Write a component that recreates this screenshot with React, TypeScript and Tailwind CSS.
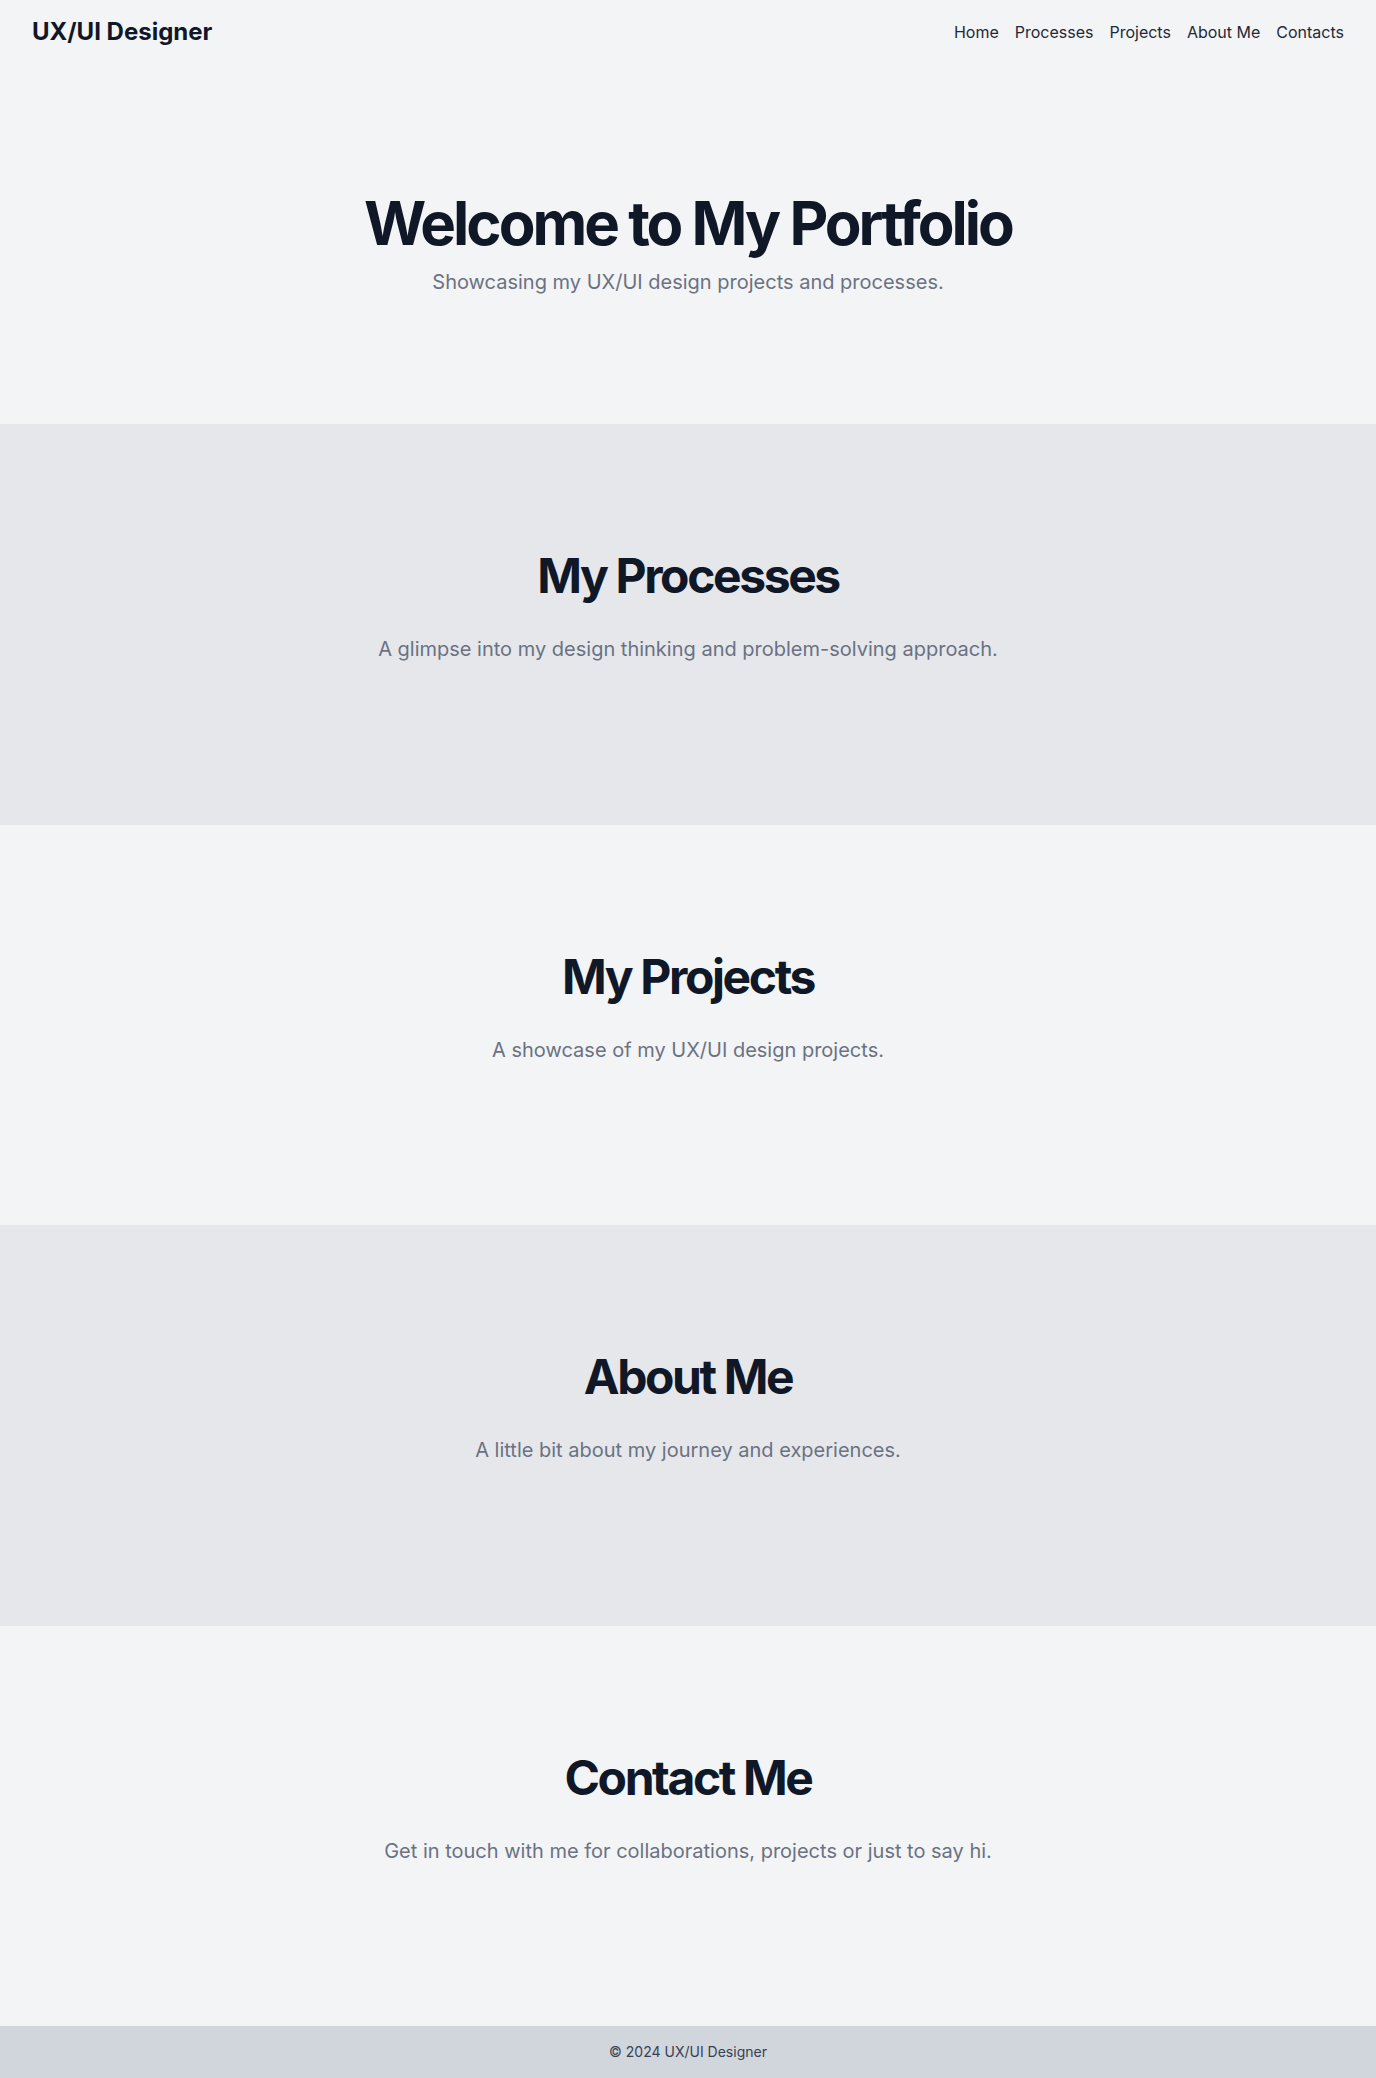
import React from "react";

const sections = [
  { title: "My Processes", text: "A glimpse into my design thinking and problem-solving approach.", bg: "bg-gray-200" },
  { title: "My Projects", text: "A showcase of my UX/UI design projects.", bg: "bg-gray-100" },
  { title: "About Me", text: "A little bit about my journey and experiences.", bg: "bg-gray-200" },
  { title: "Contact Me", text: "Get in touch with me for collaborations, projects or just to say hi.", bg: "bg-gray-100" },
];

export default function App() {
  return (
    <div className="font-['Inter',sans-serif] bg-gray-100 min-h-screen">
      <header className="h-16 px-8 flex items-center justify-between bg-gray-100">
        <div className="text-2xl font-bold text-gray-900">UX/UI Designer</div>
        <nav className="flex gap-4 text-base text-gray-800">
          <a href="#">Home</a>
          <a href="#">Processes</a>
          <a href="#">Projects</a>
          <a href="#">About Me</a>
          <a href="#">Contacts</a>
        </nav>
      </header>
      <section className="h-[360px] flex flex-col items-center justify-center bg-gray-100 text-center">
        <h1 className="text-6xl leading-none font-bold tracking-tighter text-gray-900">Welcome to My Portfolio</h1>
        <p className="mt-[15px] text-xl text-gray-500">Showcasing my UX/UI design projects and processes.</p>
      </section>
      {sections.map((s) => (
        <section key={s.title} className={`h-[400.5px] pt-32 text-center ${s.bg}`}>
          <h2 className="text-5xl leading-none font-bold tracking-tighter text-gray-900">{s.title}</h2>
          <p className="mt-[35px] text-xl text-gray-500">{s.text}</p>
        </section>
      ))}
      <footer className="h-[52px] flex items-center justify-center bg-gray-300 text-sm text-gray-700">
        © 2024 UX/UI Designer
      </footer>
    </div>
  );
}
